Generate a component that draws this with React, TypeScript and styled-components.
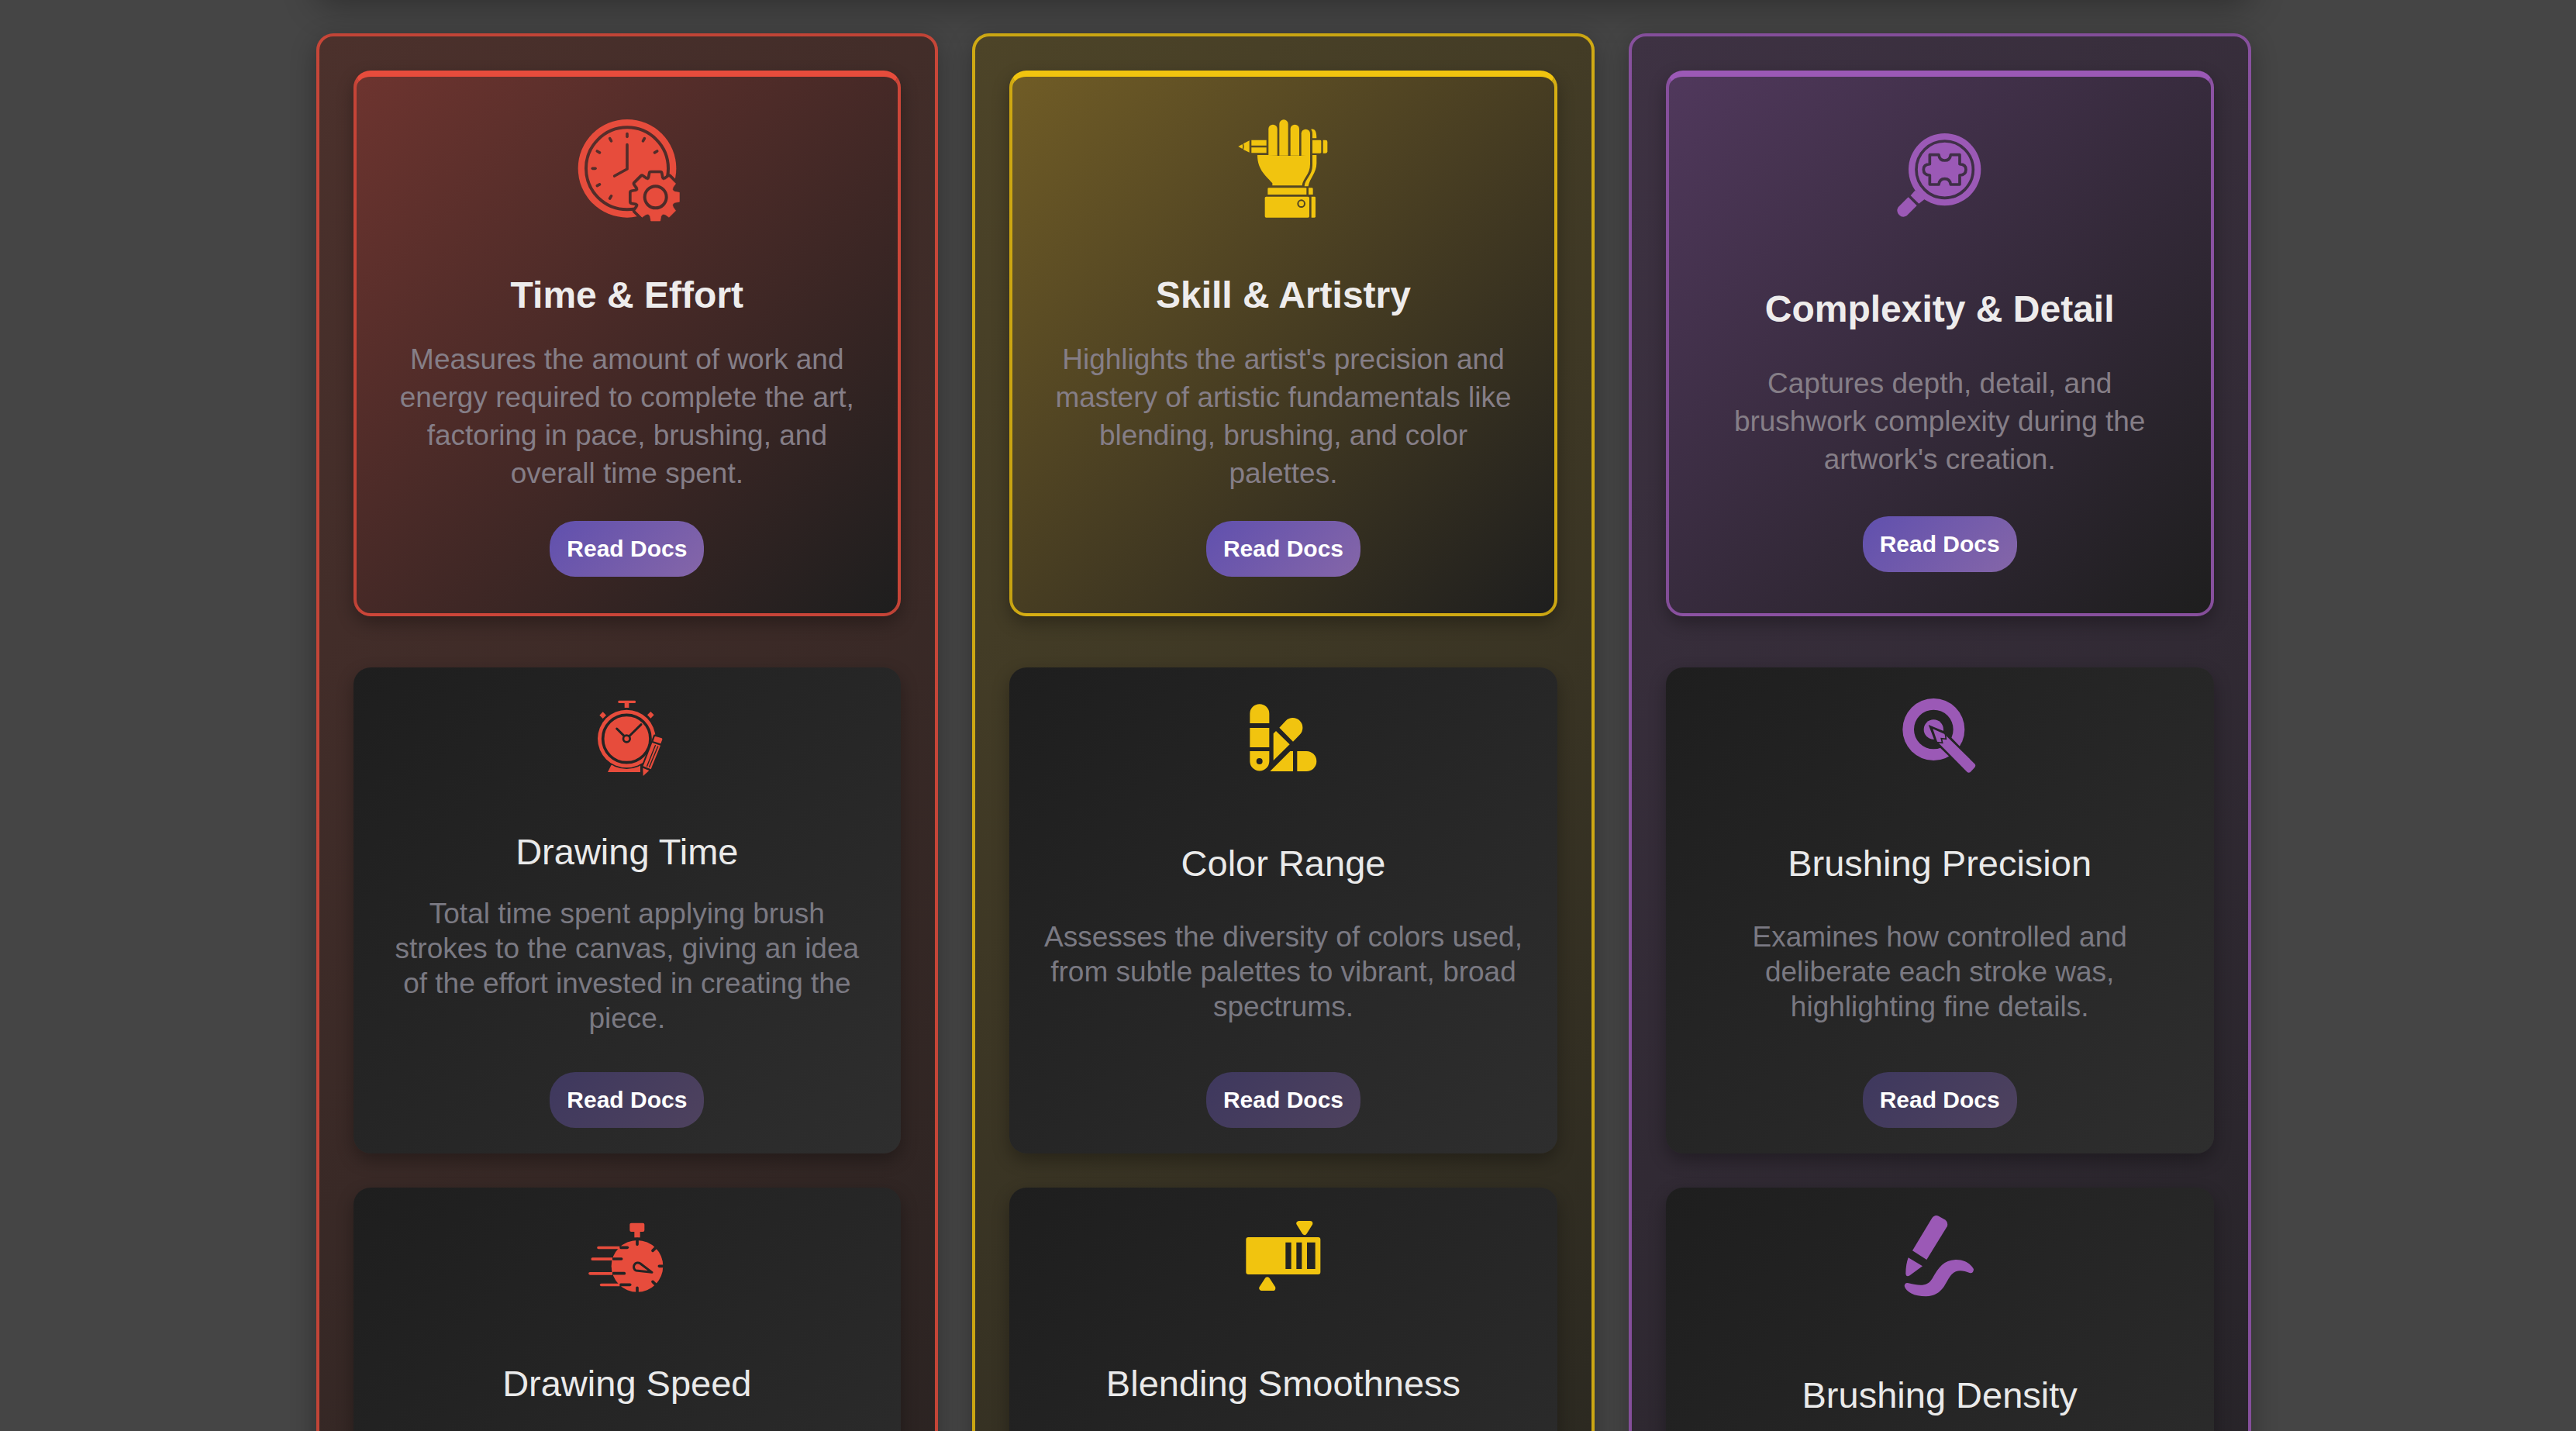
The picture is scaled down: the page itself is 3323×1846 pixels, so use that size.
import React, { useId } from "react";
import styled, { createGlobalStyle } from "styled-components";

type Theme = {
  accent: string;
  border: string;
  column: string;
  hero: string;
};

const themes: Record<"red" | "yellow" | "purple", Theme> = {
  red: {
    accent: "#e74c3c",
    border: "rgba(231, 76, 60, 0.8)",
    column: "linear-gradient(135deg, #4c312c 0%, #1e1e1e 125%)",
    hero: "linear-gradient(135deg, #6d342f 0%, #1e1e1e 100%)",
  },
  yellow: {
    accent: "#f1c40f",
    border: "rgba(241, 196, 15, 0.8)",
    column: "linear-gradient(135deg, #4d4428 0%, #1e1e1e 125%)",
    hero: "linear-gradient(135deg, #705c26 0%, #1e1e1e 100%)",
  },
  purple: {
    accent: "#9b59b6",
    border: "rgba(155, 89, 182, 0.8)",
    column: "linear-gradient(135deg, #3e3243 0%, #1e1e1e 125%)",
    hero: "linear-gradient(135deg, #50385c 0%, #1e1e1e 100%)",
  },
};

const GlobalStyle = createGlobalStyle`
  * { box-sizing: border-box; }
  body {
    margin: 0;
    background: #454545;
    font-family: "Liberation Sans", Arial, sans-serif;
  }
`;

const Page = styled.main`
  height: 100vh;
  overflow: hidden;
  padding-right: 12px;
  background: #454545;
`;

const Container = styled.div`
  width: 90%;
  max-width: 2496px;
  margin: 0 auto;
`;

/* Lower edge of the section that has been scrolled past. */
const PreviousSection = styled.div`
  height: 88px;
  margin-top: -88px;
  margin-bottom: 43px;
  border-radius: 22px;
  box-shadow: 0 9px 44px rgba(0, 0, 0, 0.3);
`;

const Columns = styled.div`
  display: grid;
  grid-template-columns: repeat(3, minmax(0, 1fr));
  align-items: start;
  gap: 44px;
`;

const Column = styled.section<{ $theme: Theme }>`
  display: flex;
  flex-direction: column;
  gap: 44px;
  padding: 44px;
  border: 4px solid ${(p) => p.$theme.border};
  border-radius: 22px;
  background: ${(p) => p.$theme.column};
  box-shadow: 0 9px 33px rgba(0, 0, 0, 0.3);
`;

const Card = styled.article`
  display: flex;
  flex-direction: column;
  align-items: center;
  justify-content: space-between;
  min-height: 627px;
  padding: 32px 42px 33px;
  border-radius: 22px;
  background: linear-gradient(135deg, #1e1e1e, #2e2e2e);
  box-shadow: 0 9px 22px rgba(0, 0, 0, 0.3);
  text-align: center;
`;

const HeroCard = styled(Card)<{ $theme: Theme }>`
  justify-content: space-around;
  min-height: 704px;
  margin-bottom: 22px;
  padding: 32px 42px;
  border: 4px solid ${(p) => p.$theme.border};
  border-top: 8px solid ${(p) => p.$theme.accent};
  background: ${(p) => p.$theme.hero};
`;

const IconBox = styled.svg<{ $size: number; $gap: number }>`
  display: block;
  flex: none;
  width: ${(p) => p.$size}px;
  height: ${(p) => p.$size}px;
  margin-bottom: ${(p) => p.$gap}px;
`;

const HeroTitle = styled.h2`
  margin: 0;
  color: #eeecec;
  font-size: 48px;
  font-weight: 700;
  line-height: 56px;
`;

const Title = styled.h3`
  margin: 0;
  color: #eaeaea;
  font-size: 47px;
  font-weight: 400;
  line-height: 54px;
`;

const Description = styled.p<{ $hero?: boolean }>`
  margin: 0 0 ${(p) => (p.$hero ? 6 : 18)}px;
  color: ${(p) => (p.$hero ? "#857e87" : "#7a7982")};
  font-size: 37px;
  line-height: ${(p) => (p.$hero ? 49 : 45)}px;
`;

const DocsButton = styled.button<{ $hero?: boolean }>`
  flex: none;
  height: 72px;
  padding: 0 22px;
  border: 0;
  border-radius: 33px;
  background: ${(p) =>
    p.$hero
      ? "linear-gradient(135deg, #6050ae, #8566a8)"
      : "linear-gradient(135deg, #3e385e, #4e425e)"};
  color: #fff;
  font-family: inherit;
  font-size: 30px;
  font-weight: 700;
  cursor: pointer;
`;

/* ---------- icons: white parts are filled, black parts are cut out ---------- */

const ON = "#fff";
const OFF = "#000";

function cutLine(d: string, width: number, key?: string | number) {
  return (
    <path
      key={key}
      d={d}
      fill="none"
      stroke={OFF}
      strokeWidth={width}
      strokeLinecap="round"
      strokeLinejoin="round"
    />
  );
}

function gearPath(cx: number, cy: number) {
  const points: string[] = [];
  for (let i = 0; i < 8; i += 1) {
    const a = (i * Math.PI) / 4;
    const corners = [
      [68, -25],
      [75, -21],
      [92, -18],
      [92, 18],
      [75, 21],
      [68, 25],
    ];
    corners.forEach(([r, t]) => {
      const x = cx + r * Math.cos(a) - t * Math.sin(a);
      const y = cy + r * Math.sin(a) + t * Math.cos(a);
      points.push(`${x.toFixed(1)} ${y.toFixed(1)}`);
    });
  }
  return `M${points.join("L")}Z`;
}

function ClockGear() {
  const gear = gearPath(376, 373);
  return (
    <>
      <circle cx="266" cy="262" r="190" fill={ON} />
      <circle cx="266" cy="262" r="159" fill="none" stroke={OFF} strokeWidth="12" />
      {[0, 30, 60, 210, 240, 270, 300, 330].map((deg) => {
        const s = Math.sin((deg * Math.PI) / 180);
        const c = -Math.cos((deg * Math.PI) / 180);
        return cutLine(
          `M${266 + 123 * s} ${262 + 123 * c}L${266 + 134 * s} ${262 + 134 * c}`,
          11,
          deg,
        );
      })}
      {cutLine("M266 170V264L217 291", 11)}
      <path d={gear} fill={OFF} stroke={OFF} strokeWidth="24" strokeLinejoin="round" />
      <path d={gear} fill={ON} stroke={ON} strokeWidth="2" strokeLinejoin="round" />
      <circle cx="376" cy="373" r="42" fill="none" stroke={OFF} strokeWidth="12" />
    </>
  );
}

function HandPencil() {
  return (
    <g fill={ON}>
      <path d="M231 212V109a17 17 0 0 1 34 0V212Z" />
      <path d="M273 212V90a17 17 0 0 1 34 0V212Z" />
      <path d="M316 212V109a17 17 0 0 1 34 0V212Z" />
      <path d="M358 212V127a17 17 0 0 1 34 0V212Z" />
      <path d="M188 210H231L269 213L311 213L354 213L392 208V245C392 285 364 300 361 328H246V319C226 294 188 270 188 210Z" />
      <path d="M396 110C411 108 417 118 417 145H401V128Q401 118 396 110Z" />
      <path d="M401 210H417V242C417 278 390 300 385 331H370C372 302 401 290 401 250Z" />
      <path d="M114 177L130 168Q134 177 130 186Z" />
      <path d="M134 166L157 154V200L134 189Q139 177 134 166Z" />
      <path d="M165 152H223V173H165ZM165 181H223V202H165Z" />
      <path d="M401 152H431Q435 152 435 156V199Q435 203 431 203H401Z" />
      <path d="M442 152H452Q459 152 459 159V196Q459 203 452 203H442Z" />
      <path d="M232 337H375Q378 337 378 340V363H228V341Q228 337 232 337Z" />
      <path d="M386 337H399Q403 337 403 341V363H386Z" />
      <rect x="217" y="371" width="172" height="81" rx="5" />
      <path d="M397 371H409Q413 371 413 375V448Q413 452 409 452H397Z" />
      <circle cx="358" cy="398" r="13" fill={ON} stroke={OFF} strokeWidth="6" />
    </g>
  );
}

function PuzzleLens() {
  return (
    <g fill={ON}>
      <circle cx="268" cy="206" r="140" />
      <circle cx="268" cy="206" r="110" fill="none" stroke={OFF} strokeWidth="11" />
      <path
        d="M210 149H245C247 165 255 171 268 171S289 165 291 149H326V185C344 186 350 195 350 206S344 227 326 228V264H291C289 248 281 242 268 242S247 248 245 264H210V228C192 227 186 217 186 206S192 186 210 185Z"
        fill="none"
        stroke={OFF}
        strokeWidth="11"
        strokeLinejoin="round"
      />
      <path d="M153 287L190 321L168 338L136 307Z" />
      <path d="M127 313L160 346L121 385A24 24 0 0 1 88 352Z" />
    </g>
  );
}

function ClockPencil() {
  return (
    <g fill={ON}>
      <path d="M145 320L131 348H257V320Z" />
      <circle cx="204" cy="219" r="117" fill={OFF} />
      <circle cx="204" cy="219" r="112" />
      <circle cx="204" cy="219" r="92" fill="none" stroke={OFF} strokeWidth="11" />
      {cutLine("M198 212L166 180M210 213L260 164", 9)}
      <circle cx="204" cy="219" r="13" fill={ON} stroke={OFF} strokeWidth="8" />
      <rect x="171" y="71" width="68" height="10" rx="4" />
      <rect x="196" y="80" width="17" height="19" />
      <path d="M112 115L125 128L112 141L99 128ZM297 114L310 127L297 140L284 127Z" />
      <path
        d="M313 209L342 219L335 242L298 337L268 363V325Z"
        fill={OFF}
        stroke={OFF}
        strokeWidth="12"
        strokeLinejoin="round"
      />
      <path d="M316 210L340 217Q343 219 342 222L336 238L307 229L312 213Q313 209 316 210Z" />
      <path d="M303 234L335 245L298 337L268 325Z" />
      {cutLine("M315 245L283 325M325 249L292 328", 4)}
      <path d="M267 332L291 342L268 363Z" />
    </g>
  );
}

function Swatches() {
  return (
    <g fill={ON}>
      <path d="M99 159V122a37.500 37.500 0 0 1 75 0V159Z" />
      <rect x="99" y="177" width="75" height="75" />
      <path d="M99 267H174V306a37.500 37.500 0 0 1 -75 0Z" />
      <circle cx="136" cy="306" r="12" fill={OFF} />
      <path d="M213 176L238 149A38 38 0 0 1 292 203L266 230Z" />
      <path d="M190 199L200 189L253 241L190 303Z" />
      <path d="M177 345L255 267H266V345Z" />
      <path d="M282 267H318a39 39 0 0 1 0 78H282Z" />
    </g>
  );
}

function TargetPencil() {
  const pencil =
    "M184 174L240 197L355 317Q359 323 354 330L338 347Q331 353 325 348L207 234Z";
  return (
    <g fill={ON}>
      <circle cx="195" cy="183" r="120" />
      <circle cx="195" cy="183" r="76" fill={OFF} />
      <circle cx="195" cy="183" r="38" />
      <path d={pencil} fill={OFF} stroke={OFF} strokeWidth="10" strokeLinejoin="miter" />
      <path d="M192 181L236 200L355 317Q359 323 354 330L338 347Q331 353 325 348L209 230Z" />
      <path
        d="M206 233L229 235L225 218L243 220L240 198"
        fill="none"
        stroke={OFF}
        strokeWidth="5"
      />
    </g>
  );
}

function SpeedWatch() {
  const trails = [
    [178, 95, 177, 207],
    [222, 72, 149, 184],
    [278, 62, 149, 195],
    [322, 106, 177, 217],
  ];
  return (
    <g fill={ON}>
      <circle cx="245" cy="250" r="100" />
      <rect x="216" y="83" width="57" height="34" rx="6" />
      <rect x="234" y="115" width="22" height="24" />
      {cutLine("M245 145V166M320 175L305 190M350 250H330M320 325L305 310M245 355V334", 11)}
      {trails.map(([y, start, edge, end]) => (
        <g key={y}>
          {cutLine(`M${edge + 4} ${y}H${end}`, 11)}
          <path d={`M${edge} ${y - 5}H${start}a5 5 0 0 0 0 11H${edge}Z`} />
        </g>
      ))}
      {cutLine("M302 274L257 240A16 16 0 1 0 240 267Z", 9)}
    </g>
  );
}

function BlendBar() {
  return (
    <g fill={ON}>
      <rect x="84" y="138" width="288" height="144" rx="9" />
      <path d="M237 158H259V261H237ZM279 158H300V261H279ZM320 158H352V261H320Z" fill={OFF} />
      <path
        d="M289 85H332L310.500 119ZM145 335H188L166.500 302Z"
        stroke={ON}
        strokeWidth="20"
        strokeLinejoin="round"
      />
    </g>
  );
}

function Marker() {
  return (
    <g fill={ON}>
      <path d="M113 190L188 65Q199 49 214 56L238 70Q253 80 247 97L168 225Z" />
      <path d="M97 217L152 250L103 286Q88 294 87 278Q87 245 97 217Z" />
      <path d="M82 327Q84 312 98 316C145 328 172 328 190 298C215 252 235 228 280 225C318 224 342 245 350 262Q350 278 336 277C308 266 285 262 265 282C240 308 235 365 165 367C120 367 88 350 82 327Z" />
    </g>
  );
}

type IconProps = {
  art: () => React.JSX.Element;
  origin: [number, number];
  color: string;
  hero?: boolean;
};

function Icon({ art: Art, origin, color, hero }: IconProps) {
  const id = useId();
  const size = hero ? 176 : 132;
  const span = size * 3;
  const box = { x: origin[0], y: origin[1], width: span, height: span };
  return (
    <IconBox
      $size={size}
      $gap={hero ? 0 : 18}
      viewBox={`${box.x} ${box.y} ${span} ${span}`}
      aria-hidden="true"
    >
      <mask id={id} maskUnits="userSpaceOnUse" {...box}>
        <Art />
      </mask>
      <rect {...box} fill={color} mask={`url(#${id})`} />
    </IconBox>
  );
}

type Entry = {
  title: string;
  text: string;
  art: () => React.JSX.Element;
  origin: [number, number];
};

const columns: { theme: Theme; hero: Entry; cards: Entry[] }[] = [
  {
    theme: themes.red,
    hero: {
      title: "Time & Effort",
      text: "Measures the amount of work and energy required to complete the art, factoring in pace, brushing, and overall time spent.",
      art: ClockGear,
      origin: [2, 48],
    },
    cards: [
      {
        title: "Drawing Time",
        text: "Total time spent applying brush strokes to the canvas, giving an idea of the effort invested in creating the piece.",
        art: ClockPencil,
        origin: [8, 39],
      },
      {
        title: "Drawing Speed",
        text: "Tracks how quickly strokes are applied, showing the pace and rhythm of the artist's work.",
        art: SpeedWatch,
        origin: [8, 42],
      },
    ],
  },
  {
    theme: themes.yellow,
    hero: {
      title: "Skill & Artistry",
      text: "Highlights the artist's precision and mastery of artistic fundamentals like blending, brushing, and color palettes.",
      art: HandPencil,
      origin: [23, 48],
    },
    cards: [
      {
        title: "Color Range",
        text: "Assesses the diversity of colors used, from subtle palettes to vibrant, broad spectrums.",
        art: Swatches,
        origin: [29, 39],
      },
      {
        title: "Blending Smoothness",
        text: "Evaluates how seamlessly colors are blended, from soft gradients to bold transitions.",
        art: BlendBar,
        origin: [29, 42],
      },
    ],
  },
  {
    theme: themes.purple,
    hero: {
      title: "Complexity & Detail",
      text: "Captures depth, detail, and brushwork complexity during the artwork's creation.",
      art: PuzzleLens,
      origin: [-16, 6],
    },
    cards: [
      {
        title: "Brushing Precision",
        text: "Examines how controlled and deliberate each stroke was, highlighting fine details.",
        art: TargetPencil,
        origin: [20, 39],
      },
      {
        title: "Brushing Density",
        text: "Shows how densely brush strokes fill the surface of the canvas.",
        art: Marker,
        origin: [20, 42],
      },
    ],
  },
];

export default function App() {
  return (
    <>
      <GlobalStyle />
      <Page>
        <Container>
          <PreviousSection />
          <Columns>
            {columns.map(({ theme, hero, cards }) => (
              <Column key={hero.title} $theme={theme}>
                <HeroCard $theme={theme}>
                  <Icon art={hero.art} origin={hero.origin} color={theme.accent} hero />
                  <HeroTitle>{hero.title}</HeroTitle>
                  <Description $hero>{hero.text}</Description>
                  <DocsButton type="button" $hero>
                    Read Docs
                  </DocsButton>
                </HeroCard>
                {cards.map((card) => (
                  <Card key={card.title}>
                    <Icon art={card.art} origin={card.origin} color={theme.accent} />
                    <Title>{card.title}</Title>
                    <Description>{card.text}</Description>
                    <DocsButton type="button">Read Docs</DocsButton>
                  </Card>
                ))}
              </Column>
            ))}
          </Columns>
        </Container>
      </Page>
    </>
  );
}
